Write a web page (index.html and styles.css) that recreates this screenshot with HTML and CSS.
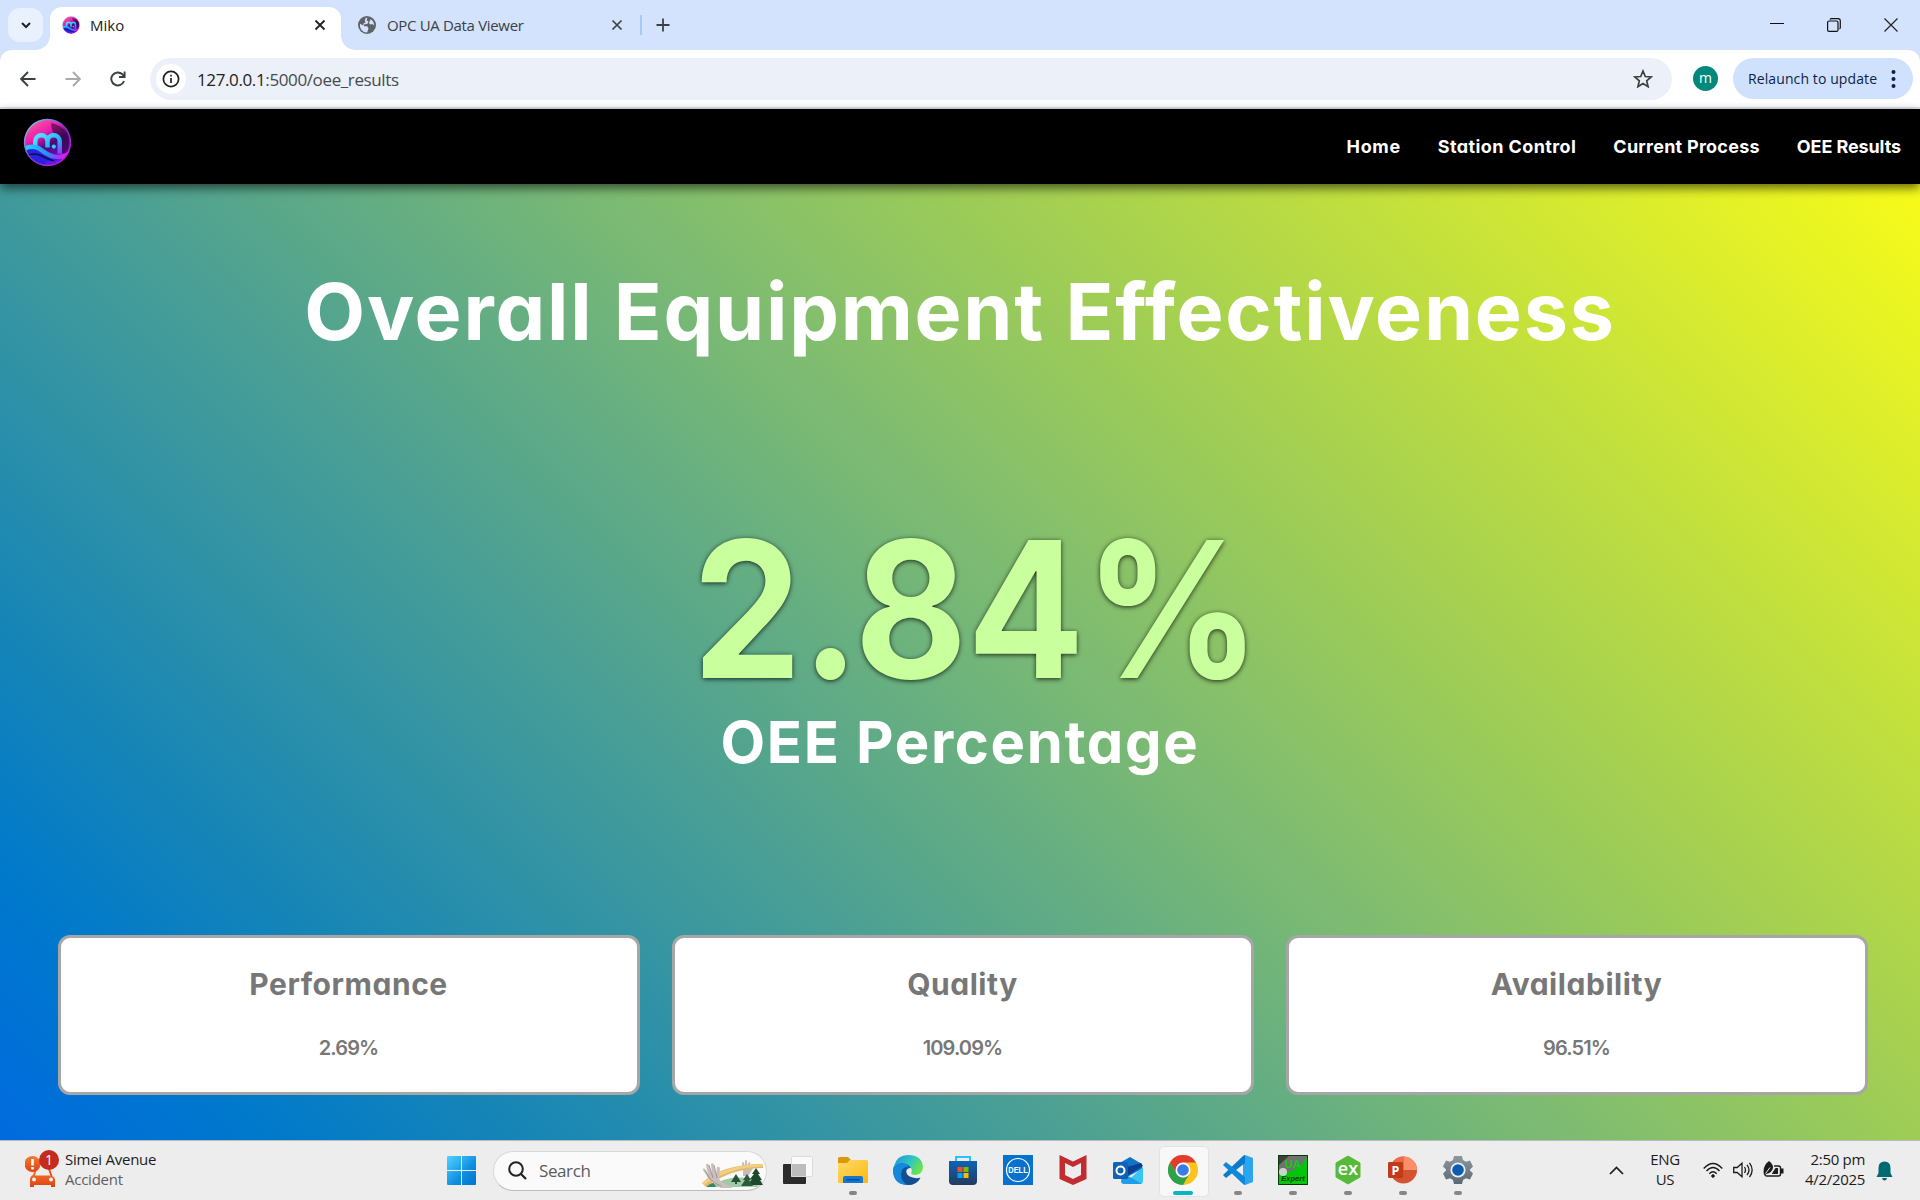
FILE: index.html
```html
<!DOCTYPE html>
<html lang="en">
<head>
<meta charset="utf-8">
<title>Miko</title>
<link rel="stylesheet" href="styles.css">
</head>
<body>
<svg class="defs" width="0" height="0" aria-hidden="true">
  <defs>
    <linearGradient id="lgBall" x1="0.2" y1="0" x2="0.8" y2="1"><stop offset="0" stop-color="#ff5a9c"/><stop offset=".32" stop-color="#ec1cae"/><stop offset=".55" stop-color="#4a0a7a"/><stop offset="1" stop-color="#8a08e0"/></linearGradient>
    <linearGradient id="lgRim" x1="0" y1="0" x2="1" y2="1"><stop offset="0" stop-color="#6fe8f0"/><stop offset=".5" stop-color="#7d3ec0"/><stop offset="1" stop-color="#d012f0"/></linearGradient>
    <linearGradient id="lgWave" gradientUnits="userSpaceOnUse" x1="2" y1="0" x2="46" y2="0"><stop offset="0" stop-color="#20d8ff"/><stop offset=".5" stop-color="#2a8cf8"/><stop offset=".75" stop-color="#b030f0"/><stop offset="1" stop-color="#ff10d8"/></linearGradient>
    <linearGradient id="lgM" x1="0" y1="0" x2="1" y2="1"><stop offset="0" stop-color="#58e4ff"/><stop offset=".6" stop-color="#22b4f4"/><stop offset="1" stop-color="#8a3cff"/></linearGradient>
    <linearGradient id="lgWin" x1="0" y1="0" x2="1" y2="1"><stop offset="0" stop-color="#4fd4ff"/><stop offset=".6" stop-color="#0f8ee0"/><stop offset="1" stop-color="#0072d0"/></linearGradient>
    <linearGradient id="lgFolder" x1="0" y1="0" x2="1" y2="1"><stop offset="0" stop-color="#ffdb6e"/><stop offset="1" stop-color="#fbb80c"/></linearGradient>
    <linearGradient id="lgEdge" x1="0" y1="0" x2="1" y2=".5"><stop offset="0" stop-color="#1792dc"/><stop offset=".55" stop-color="#2cc2c8"/><stop offset="1" stop-color="#66e452"/></linearGradient>
    <linearGradient id="lgStore" x1="0" y1="0" x2="0" y2="1"><stop offset="0" stop-color="#0b64b8"/><stop offset="1" stop-color="#243a5e"/></linearGradient>
    <linearGradient id="lgOrange" x1="0" y1="0" x2="0" y2="1"><stop offset="0" stop-color="#f47b35"/><stop offset="1" stop-color="#df4310"/></linearGradient>
    <linearGradient id="lgGear" x1="0" y1="0" x2="0" y2="1"><stop offset="0" stop-color="#8d979f"/><stop offset="1" stop-color="#5d6871"/></linearGradient>
    <clipPath id="ballClip"><circle cx="24" cy="24" r="22.500"/></clipPath>
    <symbol id="miko" viewBox="0 0 48 48">
      <g clip-path="url(#ballClip)">
        <circle cx="24" cy="24" r="22.500" fill="url(#lgBall)"/>
        <path d="M28 5q16 4 17 18 0 8-4 12l-3-1V24c0-6-4-9-7-8-2-3-4-7-3-11z" fill="#30063c" opacity=".6"/>
        <path d="M0 30q10-6 19 2t18 6 11-8v18H0z" fill="#2a22e0"/>
        <path d="M24 42q12 2 22-10l-2 16H20z" fill="#6a14e8"/>
        <path d="M12 30v-7a6 6 0 0 1 12 0v6m0-6a6 6 0 0 1 12 0v12" fill="none" stroke="url(#lgM)" stroke-width="4.400"/>
        <path d="M0 31q10-6 19 1t18 6 11-8" fill="none" stroke="url(#lgWave)" stroke-width="4.400"/>
        <path d="M5 36q8-2 13 1t12 5" fill="none" stroke="#0a0d50" stroke-width="1.500"/>
        <circle cx="30.200" cy="28" r="2" fill="#20d8ff"/>
      </g>
      <circle cx="24" cy="24" r="22.500" fill="none" stroke="url(#lgRim)" stroke-width="1.400"/>
    </symbol>
  </defs>
</svg>

<header class="tabstrip">
  <div class="tab-search"><svg width="12" height="12" viewBox="0 0 12 12"><path d="M2 4l4 4 4-4" fill="none" stroke="#1f2124" stroke-width="2"/></svg></div>
  <div class="tab tab-active">
    <svg class="favicon" width="18" height="18"><use href="#miko"/></svg>
    <span class="tab-title">Miko</span>
    <svg class="x" width="12" height="12" viewBox="0 0 12 12"><path d="M1.500 1.500l9 9m0-9l-9 9" stroke="#1f2124" stroke-width="1.800"/></svg>
  </div>
  <div class="tab tab-idle">
    <svg class="favicon" width="18" height="18" viewBox="0 0 18 18"><circle cx="9" cy="9" r="9" fill="#5f6368"/><path d="M9.500 1.800l-1 2.400 2 1.300-1 2.300-3.500.8v1.700h3.200l1.300 2-1.300 4.200A7.200 7.200 0 0 1 2 7.800l3.300 1.700.2-2 2-1-.8-2.300 1-2.200zM12.500 3.300c2.200 1.200 3.700 3.600 3.700 6.200l-2-1.500-2 .6-1.200-1.500z" fill="#d3e3fd"/></svg>
    <span class="tab-title idle-title">OPC UA Data Viewer</span>
    <svg class="x" width="12" height="12" viewBox="0 0 12 12"><path d="M1.500 1.500l9 9m0-9l-9 9" stroke="#3c4043" stroke-width="1.700"/></svg>
  </div>
  <span class="tab-sep"></span>
  <svg class="plus" width="14" height="14" viewBox="0 0 14 14"><path d="M7 .5v13M.5 7h13" stroke="#3c4043" stroke-width="1.800"/></svg>
  <div class="win-controls">
    <svg width="14" height="14" viewBox="0 0 14 14"><path d="M0 5.500h14" stroke="#111" stroke-width="1"/></svg>
    <svg width="14" height="14" viewBox="0 0 14 14" fill="none" stroke="#111" stroke-width="1.200"><rect x=".6" y="3" width="10.400" height="10.400" rx="1.500"/><path d="M3 1.600Q3.400.7 4.600.7H11q2.300 0 2.300 2.300v6.400q0 1.200-.9 1.600"/></svg>
    <svg width="14" height="14" viewBox="0 0 14 14"><path d="M.5.5l13 13m0-13l-13 13" stroke="#222" stroke-width="1.200"/></svg>
  </div>
</header>

<div class="toolbar-wrap">
<div class="toolbar">
  <svg class="tool" width="16" height="16" viewBox="0 0 16 16"><path d="M15.500 8H1.500M8 1L1.200 8 8 15" fill="none" stroke="#3c4043" stroke-width="1.900"/></svg>
  <svg class="tool" width="16" height="16" viewBox="0 0 16 16"><path d="M.5 8h14M8 1l6.800 7L8 15" fill="none" stroke="#a8aaad" stroke-width="1.900"/></svg>
  <svg class="tool" width="16" height="16" viewBox="0 0 16 16"><path d="M14 10a6.500 6.500 0 1 1-1.600-6.700L14.500 5.500M14.600.5v5.500H9" fill="none" stroke="#3c4043" stroke-width="1.900"/></svg>
  <div class="omnibox">
    <span class="info"><svg width="18" height="18" viewBox="0 0 18 18"><circle cx="9" cy="9" r="7.600" fill="none" stroke="#1f2124" stroke-width="1.700"/><path d="M9 8v5M9 4.800v1.800" stroke="#1f2124" stroke-width="1.700"/></svg></span>
    <span class="url"><b>127.0.0.1</b>:5000/oee_results</span>
    <svg class="star" width="20" height="19" viewBox="0 0 20 19"><path d="M10 2l2.300 5.500 5.900.5-4.500 3.900 1.400 5.800L10 14.600l-5.100 3.100 1.400-5.800L1.800 8l5.900-.5z" fill="none" stroke="#3c4043" stroke-width="1.700"/></svg>
  </div>
  <span class="avatar">m</span>
  <div class="relaunch">Relaunch to update<svg width="5" height="18" viewBox="0 0 5 18" fill="#0b1f4b"><circle cx="2.500" cy="2" r="2"/><circle cx="2.500" cy="9" r="2"/><circle cx="2.500" cy="16" r="2"/></svg></div>
</div>
</div>

<nav class="navbar">
  <svg class="logo" width="49" height="49"><use href="#miko"/></svg>
  <ul class="links"><li class="l-home">Home</li><li class="l-station">Station Control</li><li class="l-process">Current Process</li><li class="l-oee">OEE Results</li></ul>
</nav>

<main class="page">
  <h1>Overall Equipment Effectiveness</h1>
  <div class="score">2.84%</div>
  <div class="score-label">OEE Percentage</div>
  <section class="cards">
    <article class="card"><h2>Performance</h2><p>2.69%</p></article>
    <article class="card"><h2>Quality</h2><p>109.09%</p></article>
    <article class="card"><h2>Availability</h2><p>96.51%</p></article>
  </section>
</main>

<footer class="taskbar">
  <div class="widget">
    <svg width="36" height="38" viewBox="0 0 36 38"><path d="M10 20h14l3 7q3 1 3 4v7h-4v-2H9v2H5v-7q0-4 3-5z" fill="url(#lgOrange)"/><path d="M12 20h12l2 6.500H10z" fill="#ededed"/><path d="M24 20l2.500 7" stroke="#e5531b" stroke-width="2"/><circle cx="9" cy="30.500" r="2" fill="#ededed"/><circle cx="26" cy="30.500" r="2" fill="#ededed"/><circle cx="7.500" cy="15" r="8" fill="url(#lgOrange)"/><path d="M7.500 10v6.500M7.500 18v2.500" stroke="#fff" stroke-width="2.600"/><circle cx="24" cy="11" r="10" fill="#c42b1c"/><text x="24" y="16" text-anchor="middle" font-family="Open Sans" font-size="14" fill="#fff">1</text></svg>
    <div class="lines"><div>Simei Avenue</div><div class="dim">Accident</div></div>
  </div>
  <svg class="start" width="29" height="29" viewBox="0 0 29 29"><path d="M1 0h13v14H0V1q0-1 1-1zM15 0h13q1 0 1 1v13H15zM0 15h14v14H1q-1 0-1-1zM15 15h14v13q0 1-1 1H15z" fill="url(#lgWin)"/></svg>
  <div class="search">
    <svg width="19" height="19" viewBox="0 0 19 19"><circle cx="8" cy="8" r="6.800" fill="none" stroke="#222" stroke-width="2"/><path d="M13 13l5 5" stroke="#222" stroke-width="2.300"/></svg>
    <span>Search</span>
    <svg class="art" width="62" height="30" viewBox="0 0 62 30">
      <path d="M10 28q18-14 50-5l-5 6H12z" fill="#9fcaa5"/><path d="M3 26l9-1 2 4H5z" fill="#2f8a6c"/>
      <path d="M41 13l-1-8q1-2 2 0l1 4V3q1-2 2 0v5l2-4q2 0 1 2l-1 5 3-2q2 1 0 3l-4 6h-5z" fill="#c9bcb8"/>
      <path d="M0 25Q20 6 61 6v4Q29 10 4 29z" fill="#e6b866"/><path d="M0 25Q21 7 61 6v2.500Q27 9 2 27z" fill="#f3cf86"/>
      <path d="M1 12q0-3 2-1l3 6L4 7q1-3 3 0l3 9-1-10q2-2 3 1l2 10 1-8q3-1 3 2l-1 10q4 5 12 7l1 2H19Q9 23 6 20z" fill="#cabfbb"/><path d="M3 12l5 9q5 5 11 7M7 7l4 13M12 7l3 13" fill="none" stroke="#8d807f" stroke-width=".7"/>
      <path d="M34 16l5 8h-4v2h-2v-2h-4z" fill="#255335"/><path d="M54 10l4 6h-2l4 6h-2l3 5H46l4-6h-2l4-5h-2z" fill="#1c4a2d"/><path d="M45 16l4 6h-2l4 6H39l4-6h-2z" fill="#2b5c37"/>
    </svg>
  </div>
  <div class="apps">
    <div class="app"><svg width="30" height="30" viewBox="0 0 30 30"><rect x="0" y="9" width="23" height="20" rx="1" fill="#2b2b2b"/><rect x="8" y="1" width="22" height="21" rx="1" fill="#fafafa"/><path d="M8 9h15v13H8z" fill="#bdbdbd"/><rect x="8.500" y="1.500" width="21" height="20" rx="1" fill="none" stroke="#dadada"/></svg></div>
    <div class="app on"><svg width="30" height="30" viewBox="0 0 30 30"><path d="M0 3.500Q0 2 1.500 2H10l3 3-2 4H0z" fill="#dc9a0b"/><path d="M0 8h9l3-3h16.500Q30 5 30 6.500V27q0 1-1 1H1q-1 0-1-1z" fill="url(#lgFolder)"/><path d="M5 28v-5q0-2 2-2h16q2 0 2 2v5z" fill="#1478d0"/><path d="M8.500 24.700h13" stroke="#0a4a94" stroke-width="1.400"/></svg></div>
    <div class="app"><svg width="30" height="30" viewBox="0 0 30 30"><path d="M0 15Q1 8 8 8q9 0 10 5-5 0-5 5 0 7 8 7 4 0 6.500-2-4 7-12.500 7Q1 30 0 15z" fill="#0c62b4"/><path d="M1 11Q4 0 15 0q14 0 15 12 0 7-8 8-5 0-3.500-3 1-2-1-5Q14 8 9 8q-6 0-9 7 0-2 1-4z" fill="url(#lgEdge)"/><path d="M8 19q0-5 5-7-1 8 5 10 5 2 9.500.5Q23 30 16 30 8 28 8 19z" fill="#124f91"/><path d="M0 15q2-6 8-7 5 0 8 3-8 1-8 9 0 6 6 10Q0 29 0 15z" fill="#1688dc"/></svg></div>
    <div class="app"><svg width="30" height="30" viewBox="0 0 30 30"><path d="M8 6V2h14v4" fill="none" stroke="#2bc3f5" stroke-width="2"/><path d="M1 6h28v20q0 4-4 4H5q-4 0-4-4z" fill="url(#lgStore)"/><path d="M9.500 12h5v5h-5z" fill="#f25022"/><path d="M15.500 12h5v5h-5z" fill="#7fba00"/><path d="M9.500 18h5v5h-5z" fill="#00a4ef"/><path d="M15.500 18h5v5h-5z" fill="#ffb900"/></svg></div>
    <div class="app"><svg width="30" height="30" viewBox="0 0 30 30"><path d="M0 0h30v30H0z" fill="#0672ce"/><circle cx="15" cy="15" r="11.500" fill="none" stroke="#fff" stroke-width="1.200"/><text x="15" y="18.300" text-anchor="middle" font-family="Liberation Sans" font-weight="700" font-size="8.500" textLength="19.500" lengthAdjust="spacingAndGlyphs" fill="#fff">DELL</text></svg></div>
    <div class="app"><svg width="30" height="30" viewBox="0 0 30 30"><path d="M1.500 0L15 6.500 28.500 0v24L15 30 1.500 24zM7 8v12l8 4 8-4V8l-8 4z" fill="#c22b30" fill-rule="evenodd"/></svg></div>
    <div class="app"><svg width="30" height="30" viewBox="0 0 30 30"><path d="M5 9l12-7 12 7v5L14 22 5 17z" fill="#1173c8"/><path d="M14 12l14-4 2 3-16 10z" fill="#0b3f92"/><path d="M30 12v14q0 3-3 3H11z" fill="#38c6f4"/><path d="M10 18l19 11H11q-3 0-3-3z" fill="#1e9ee6"/><rect x="0" y="7" width="15" height="17" rx="1.500" fill="#1063b4"/><circle cx="7.500" cy="15.500" r="4" fill="none" stroke="#fff" stroke-width="2"/></svg></div>
    <div class="app active"><svg width="30" height="30" viewBox="0 0 30 30"><circle cx="15" cy="15" r="15" fill="#fcc31e"/><path d="M2 7.500A15 15 0 0 1 28 7.500H15L8.500 18.700z" fill="#e33b2e"/><path d="M2 7.500A15 15 0 0 0 15 30l6.500-11.300A7.500 7.500 0 0 1 8.500 18.700z" fill="#2da24c"/><circle cx="15" cy="15" r="7.500" fill="#fff"/><circle cx="15" cy="15" r="5.800" fill="#3a7bea"/></svg></div>
    <div class="app on"><svg width="30" height="30" viewBox="0 0 30 30"><path d="M22 0l8 3v24l-8 3-2-1V1z" fill="#2aa5ee"/><path d="M0 20L20 1l2-1v8L3 23z" fill="#0a7acb"/><path d="M3 7l19 15v8l-2-1L0 10z" fill="#0c88dc"/></svg></div>
    <div class="app on"><svg width="30" height="30" viewBox="0 0 30 30"><path d="M0 0h30v30H0z" fill="#04c50b"/><path d="M0 0h30L25 8Q18 16 0 20z" fill="#6f7370"/><path d="M0 0h12L0 11z" fill="#3d403d"/><circle cx="5" cy="17" r="4" fill="#e4ebe4" opacity=".8"/><path d="M.5.5h29v29H.5z" fill="none" stroke="#083808"/><text x="15" y="12.500" text-anchor="middle" font-family="Liberation Sans" font-weight="700" font-size="11" fill="#0ed010">UA</text><text x="15" y="25.500" text-anchor="middle" font-family="Liberation Sans" font-weight="700" font-style="italic" font-size="7.500" fill="#063d06">Expert</text></svg></div>
    <div class="app on"><svg width="30" height="30" viewBox="0 0 30 30"><path d="M15 1l12 7v14L15 29 3 22V8z" fill="#57b938" stroke="#57b938" stroke-linejoin="round"/><text x="15" y="20" text-anchor="middle" font-family="Open Sans" font-weight="600" font-size="18" fill="#fff">ex</text></svg></div>
    <div class="app on"><svg width="30" height="30" viewBox="0 0 30 30"><circle cx="15.500" cy="15" r="13.500" fill="#d35230"/><path d="M15.500 1.500A13.500 13.500 0 0 1 29 15H15.500z" fill="#ff8f6b"/><path d="M15.500 1.500V15H2A13.500 13.500 0 0 1 15.500 1.500z" fill="#ed6c47"/><rect x="0" y="7" width="15" height="16" rx="1.300" fill="#c13b1b"/><text x="7.500" y="19.500" text-anchor="middle" font-family="Open Sans" font-weight="700" font-size="12.500" fill="#fff">P</text></svg></div>
    <div class="app on"><svg width="30" height="30" viewBox="0 0 30 30"><path d="M11 1h8l1 4 3 1.700 4-1.200 3 6-3 3v1l3 3-3 6-4-1.200L20 25l-1 4h-8l-1-4-3-1.700-4 1.200-3-6 3-3v-1l-3-3 3-6 4 1.200L10 5z" fill="url(#lgGear)"/><circle cx="15" cy="15" r="7.600" fill="#e9f0f5"/><circle cx="15" cy="15" r="5.800" fill="#0d5cae"/></svg></div>
  </div>
  <div class="tray">
    <svg width="15" height="9" viewBox="0 0 15 9"><path d="M1 8l6.500-6.500L14 8" fill="none" stroke="#1c1c1c" stroke-width="1.700"/></svg>
    <div class="lang"><div>ENG</div><div>US</div></div>
    <div class="status">
      <svg width="20" height="16" viewBox="0 0 20 16" fill="none" stroke="#1c1c1c" stroke-width="1.400"><path d="M.7 6.500Q10-3.500 19.300 6.500M3.500 9Q10 2 16.500 9M6.300 11.700q3.700-3.700 7.400 0"/><circle cx="10" cy="14" r="1.300" fill="#1c1c1c" stroke-width="1"/></svg>
      <svg width="20" height="18" viewBox="0 0 20 18" fill="none" stroke="#1c1c1c" stroke-width="1.300"><path d="M.7 6.500h3.500L9 2.300v13.400l-4.800-4.200H.7zM11.500 6q2 3 0 6M14 3.800q4 5.200 0 10.400M16.500 1.800q5.300 7.200 0 14.400"/></svg>
      <svg width="21" height="18" viewBox="0 0 21 18"><path d="M11 5h4.500q2 0 2 2v6q0 2-2 2H4q-2 0-2-2" fill="none" stroke="#1c1c1c" stroke-width="1.400"/><path d="M18 7.500h2.500v5H18zM9 12.500L12.500 7H15v6H9zM6 0q4.500 3.500 4 7Q9 12 3 13l-2 1Q-1 5 6 0z" fill="#1c1c1c"/><path d="M2.500 12.500L7 6.500" stroke="#ededed"/></svg>
    </div>
    <div class="clock"><div>2:50 pm</div><div>4/2/2025</div></div>
    <svg width="17" height="20" viewBox="0 0 17 20"><path d="M8.500.5q6 0 6 6.500v5l2 4H.5l2-4V7q0-6.500 6-6.500zM6 17h5q-.5 2.500-2.500 2.500T6 17z" fill="#006a73"/></svg>
  </div>
</footer>
</body>
</html>
```
FILE: styles.css
```css
* { box-sizing: border-box; }
body { margin: 0; width: 1920px; height: 1200px; overflow: hidden; display: flex; flex-direction: column; font-family: "Open Sans", "Noto Sans", sans-serif; font-size: 15px; color: #1c1c1c; background: #fff; }
svg { display: block; flex: none; }
.defs { position: absolute; }

/* Browser tab strip */
.tabstrip { height: 50px; flex: none; display: flex; align-items: center; background: #d3e3fd; padding-left: 8px; }
.tab-search { width: 35px; height: 34px; border-radius: 12px; background: #e9f1fe; display: flex; align-items: center; justify-content: center; }
.tab { display: flex; align-items: center; }
.tab-active { position: relative; width: 291px; height: 43px; margin: 7px 0 0 7px; padding: 0 15px 7px 12px; background: #fff; border-radius: 12px 12px 0 0; }
.tab-active::before, .tab-active::after { content: ""; position: absolute; bottom: 0; width: 14px; height: 14px; }
.tab-active::before { left: -14px; background: radial-gradient(circle at 0 0, transparent 13.5px, #fff 14px); }
.tab-active::after { right: -14px; background: radial-gradient(circle at 100% 0, transparent 13.5px, #fff 14px); }
.tab-title { margin-left: 10px; line-height: 20px; }
.tab .x { margin-left: auto; }
.tab-idle { width: 282px; padding-left: 17px; color: #3c4043; }
.idle-title { margin-left: 11px; letter-spacing: -0.33px; }
.tab-sep { width: 2px; height: 20px; margin-left: 17px; background: #a8c7fa; }
.plus { margin-left: 14px; }
.win-controls { margin-left: auto; padding-right: 22px; display: flex; gap: 43px; }

/* Browser toolbar */
.toolbar-wrap { height: 59px; flex: none; background: #d3e3fd; }
.toolbar { height: 59px; display: flex; align-items: center; background: #fff; border-bottom: 2px solid #dfe3e6; border-radius: 12px 12px 0 0; padding: 0 7px 0 20px; }
.tool { margin-right: 29px; }
.omnibox { width: 1522px; height: 42px; margin-left: -5px; border-radius: 21px; background: #ebf0f9; display: flex; align-items: center; padding: 0 19px 0 6px; }
.info { width: 30px; height: 30px; border-radius: 50%; background: #fff; display: flex; align-items: center; justify-content: center; }
.url { margin: 2px 0 0 11px; font-size: 17px; letter-spacing: -0.38px; color: #474a4e; }
.url b { font-weight: 400; color: #1f2124; }
.star { margin-left: auto; }
.avatar { width: 25px; height: 25px; margin-left: 21px; border-radius: 50%; background: #00897b; color: #fff; font-size: 14px; line-height: 23px; text-align: center; }
.relaunch { width: 180px; height: 41px; margin-left: 14.5px; padding: 0 17px 0 15.5px; border-radius: 21px; background: #d0e1fd; color: #0b1f4b; font-size: 14px; letter-spacing: 0.1px; display: flex; align-items: center; justify-content: space-between; }

/* Site navigation */
.navbar { position: relative; height: 75px; flex: none; display: flex; align-items: center; justify-content: space-between; background: #000; padding: 0 19px 0 22.5px; box-shadow: 0 4px 10px rgba(0, 0, 0, 0.6); font: 700 18px Inter, sans-serif; font-feature-settings: "cv11"; }
.logo { margin-top: -8px; }
.links { display: flex; gap: 37px; margin: 0; padding: 0; list-style: none; color: #fff; }
.l-home { letter-spacing: 0.65px; }
.l-station { letter-spacing: 0.4px; }
.l-process { letter-spacing: 0.25px; }
.l-oee { letter-spacing: -0.1px; }

/* OEE results */
.page { height: 956px; flex: none; display: flex; flex-direction: column; align-items: center; color: #fff; font-family: Inter, sans-serif; font-feature-settings: "cv11"; background: linear-gradient(45deg, #006adf 0%, #0079cc 9%, #1484b8 17%, #449c99 33.5%, #7dbb72 53%, #9fcd55 65.5%, #d2e832 84%, #ffff14 100%) 0 100% / 1920px 1031px; }
h1, h2, p { margin: 0; }
h1 { margin-top: 72px; font-size: 79px; line-height: 110px; font-weight: 700; letter-spacing: 1.75px; }
.score { margin-top: 158px; margin-left: 32px; font-size: 190px; line-height: 170px; font-weight: 700; color: #caff9d; transform: scaleX(0.912); text-shadow: 0 1px 6px rgba(0, 0, 0, 0.8); }
.score-label { margin-top: 13px; font-size: 58px; line-height: 70px; font-weight: 700; letter-spacing: 1.65px; }
.cards { width: 1810px; margin: auto 0 45px 5px; display: grid; grid-template-columns: repeat(3, 582px); gap: 32px; }
.card { height: 160px; border: 3px solid #a6a6a6; border-radius: 12px; background: #fff; color: #777; text-align: center; padding-top: 26px; }
.card h2 { font-size: 30px; line-height: 40px; font-weight: 700; letter-spacing: 0.55px; }
.card p { margin-top: 29px; font-size: 20px; line-height: 30px; font-weight: 600; letter-spacing: -0.9px; }

/* Taskbar */
.taskbar { height: 60px; flex: none; display: flex; align-items: center; background: #ededed; border-top: 1px solid #b9bcbc; line-height: 20px; }
.widget { width: 447px; display: flex; padding-left: 25px; }
.widget .lines { margin: -3px 0 0 4px; letter-spacing: -0.25px; }
.widget svg { margin-top: -3px; }
.dim { color: #5f5f5f; }
.search { width: 274px; height: 40px; margin-left: 17px; display: flex; align-items: center; background: #fafafa; border: 1px solid #d8d8d8; border-bottom-color: #bcbcbc; border-radius: 20px; padding: 0 2px 0 14px; font-size: 17px; color: #5c5c5c; }
.search span { margin-left: 12px; letter-spacing: -0.4px; }
.art { margin-left: auto; margin-top: 5px; }
.apps { display: flex; margin-left: 3px; height: 59px; }
.app { position: relative; width: 55px; height: 59px; display: flex; justify-content: center; padding-top: 14px; }
.app svg { position: relative; }
.on::after, .active::after { content: ""; position: absolute; bottom: 5px; left: 23.5px; width: 8px; height: 4px; border-radius: 2px; background: #868686; }
.active::after { left: 17.5px; width: 20px; background: #00b7c3; }
.active::before { content: ""; position: absolute; top: 5px; left: 3.5px; width: 48px; height: 49px; border-radius: 5px; background: #f8f8f8; border: 1px solid #e3e3e3; }
.tray { margin-left: auto; display: flex; align-items: center; padding-right: 27px; }
.lang { width: 40px; margin: -3px 0 0 21px; text-align: center; letter-spacing: -0.4px; }
.status { display: flex; align-items: center; gap: 10px; margin: -2px 0 0 18px; }
.clock { width: 66px; margin: -4px 0 0 15px; text-align: right; letter-spacing: -0.3px; }
.clock + svg { margin-left: 11px; }
```
